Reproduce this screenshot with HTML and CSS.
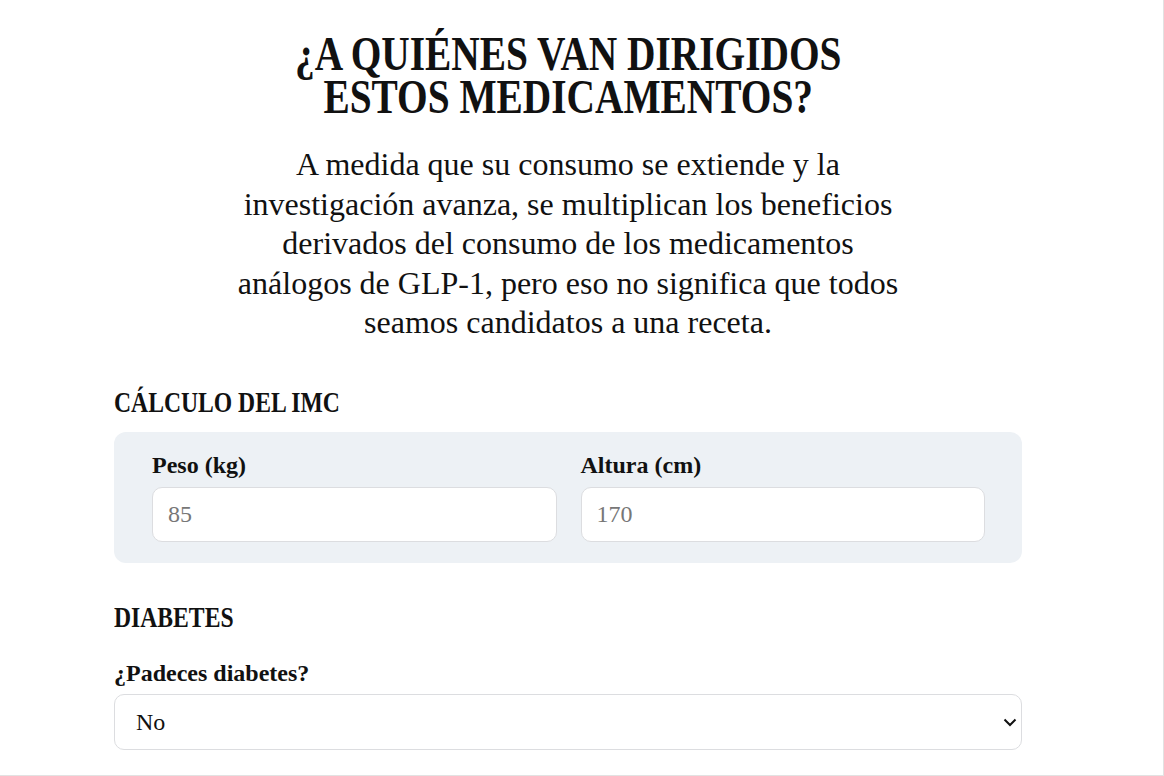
FILE: index.html
```html
<html><head>
<title>GLP-1</title>
<link rel="stylesheet" href="styles.css">
</head>
<body>
<div class="frame">
  <div class="content">
    <h1 class="title"><span>¿A QUIÉNES VAN DIRIGIDOS<br>ESTOS MEDICAMENTOS?</span></h1>
    <p class="intro">A medida que su consumo se extiende y la<br>
      investigación avanza, se multiplican los beneficios<br>
      derivados del consumo de los medicamentos<br>
      análogos de GLP-1, pero eso no significa que todos<br>
      seamos candidatos a una receta.</p>

    <h2 class="section"><span>CÁLCULO DEL IMC</span></h2>
    <div class="panel">
      <div class="field">
        <label for="peso">Peso (kg)</label>
        <input id="peso" type="text" placeholder="85">
      </div>
      <div class="field">
        <label for="altura">Altura (cm)</label>
        <input id="altura" type="text" placeholder="170">
      </div>
    </div>

    <h2 class="section diab"><span>DIABETES</span></h2>
    <label class="q" for="diab">¿Padeces diabetes?</label>
    <div class="select-wrap">
      <select id="diab">
        <option>No</option>
        <option>Sí</option>
      </select>
      <svg class="chev" width="14" height="9" viewBox="0 0 14 9"><path d="M1.5 1.5l5.5 5.5 5.5-5.5" fill="none" stroke="#111" stroke-width="2"/></svg>
    </div>
  </div>
</div>
</body></html>
```

FILE: styles.css
```css
body{margin:0;background:#fff;color:#111;font-family:"Liberation Serif","DejaVu Serif",serif;}
.frame{width:1163px;height:775px;border-right:1px solid #e2e2e2;border-bottom:1px solid #e2e2e2;overflow:hidden;}
.content{width:908px;margin-left:114px;}
.title{margin:32px 0 0;text-align:center;font-size:48px;line-height:43px;font-weight:bold;}
.title span{display:inline-block;transform:scaleX(0.82);}
.intro{margin:27px 0 0;text-align:center;font-size:32px;line-height:39.5px;}
.section{margin:44px 0 0;font-size:29px;line-height:30px;font-weight:bold;white-space:nowrap;}
.section span{display:inline-block;transform:scaleX(0.815);transform-origin:left center;}
.section.diab{margin-top:39px;}
.panel{margin-top:15px;background:#edf1f5;border-radius:12px;padding:20px 37px 21px 38px;display:grid;grid-template-columns:1fr 1fr;gap:24px;}
.field label{display:block;font-size:24px;font-weight:bold;line-height:26px;margin-bottom:9px;}
.field input{display:block;width:100%;box-sizing:border-box;height:55px;border:1px solid #dcdde0;border-radius:10px;background:#fff;padding:0 15px;font-family:inherit;font-size:24px;color:#111;outline:none;}
.field input::placeholder{color:#777;}
.q{display:block;margin-top:28px;font-size:24px;font-weight:bold;line-height:26px;}
.select-wrap{position:relative;margin-top:8px;}
.select-wrap select{display:block;width:100%;height:56px;box-sizing:border-box;appearance:none;-webkit-appearance:none;border:1px solid #dcdde0;border-radius:10px;background:#fff;padding:0 21px;font-family:inherit;font-size:24px;color:#111;}
.chev{position:absolute;right:5px;top:24px;pointer-events:none;}
```
